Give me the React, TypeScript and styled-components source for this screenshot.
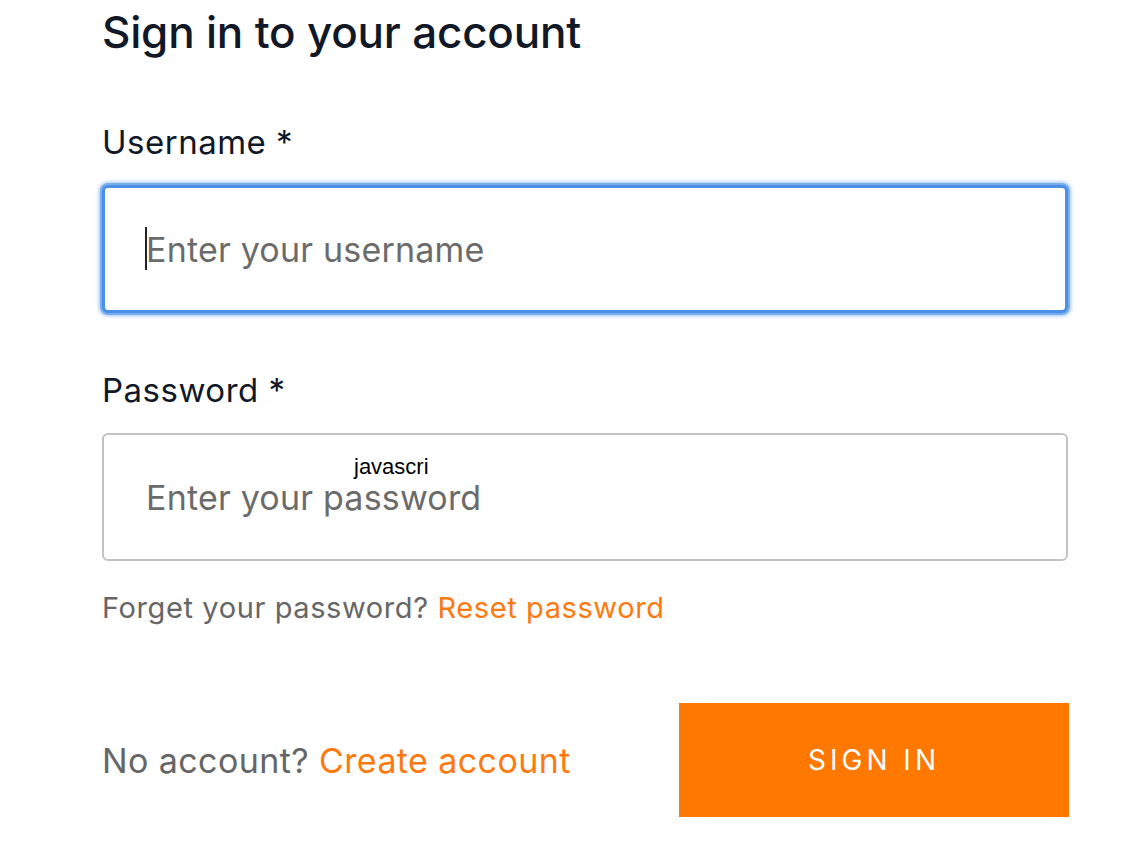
import React from "react";
import styled, { createGlobalStyle } from "styled-components";

const Global = createGlobalStyle`
  html, body { margin: 0; padding: 0; background: #ffffff; }
  body { font-family: Inter, "Noto Sans", "Liberation Sans", sans-serif; -webkit-font-smoothing: antialiased; }
  * { box-sizing: border-box; }
`;

const Page = styled.div`
  width: 1134px;
  height: 846px;
  padding: 0 66px 0 102px;
  display: flex;
  flex-direction: column;
`;

const Title = styled.h1`
  margin: 0;
  padding-top: 5px;
  font-size: 44px;
  line-height: 54px;
  font-weight: 500;
  color: #111827;
  letter-spacing: -0.2px;
`;

const Field = styled.div<{ $top: number }>`
  display: flex;
  flex-direction: column;
  margin-top: ${(p) => p.$top}px;
`;

const Label = styled.label`
  font-size: 33px;
  line-height: 40px;
  color: #111827;
  font-weight: 400;
  letter-spacing: 0.5px;
  margin-bottom: 23px;
`;

const InputWrap = styled.div`
  position: relative;
  height: 128px;
`;

const Input = styled.input<{ $focused?: boolean }>`
  width: 100%;
  height: 100%;
  border-radius: 6px;
  border: ${(p) => (p.$focused ? "3px solid #4a8fe8" : "2px solid #c2c2c2")};
  box-shadow: ${(p) =>
    p.$focused
      ? "0 0 0 2px rgba(74,143,232,0.6), 0 0 3px 4px rgba(74,143,232,0.35)"
      : "none"};
  padding: 0 0 0 ${(p) => (p.$focused ? 41 : 42)}px;
  font-family: inherit;
  font-size: 34px;
  letter-spacing: 0.2px;
  color: #333;
  outline: none;
  background: #fff;
  &::placeholder { color: #6b6b6b; }
`;

const Caret = styled.span`
  position: absolute;
  left: 43px;
  top: 42px;
  width: 2px;
  height: 43px;
  background: #222;
`;

const Overlay = styled.span`
  position: absolute;
  left: 252px;
  top: 21px;
  font-family: "Liberation Sans", Arial, sans-serif;
  font-size: 22px;
  color: #000;
  pointer-events: none;
`;

const Hint = styled.p`
  margin: 30px 0 0;
  font-size: 29px;
  line-height: 34px;
  color: #666;
  letter-spacing: 0.6px;
`;

const Link = styled.a`
  color: #ff7a0e;
  text-decoration: none;
  cursor: pointer;
`;

const Footer = styled.div`
  margin-top: 78px;
  display: flex;
  align-items: center;
  justify-content: space-between;
`;

const Note = styled.span`
  font-size: 34px;
  letter-spacing: 0.4px;
  color: #666;
`;

const Button = styled.button`
  width: 390px;
  height: 114px;
  margin-right: -1px;
  border: none;
  background: #ff7800;
  color: #fff;
  font-family: inherit;
  font-size: 28px;
  letter-spacing: 4px;
  font-weight: 400;
  text-transform: uppercase;
  cursor: pointer;
`;

export default function App() {
  return (
    <>
      <Global />
      <Page>
        <Title>Sign in to your account</Title>
        <Field $top={63}>
          <Label>Username *</Label>
          <InputWrap>
            <Input $focused placeholder="Enter your username" />
            <Caret />
          </InputWrap>
        </Field>
        <Field $top={57}>
          <Label>Password *</Label>
          <InputWrap>
            <Input type="password" placeholder="Enter your password" />
            <Overlay>javascri</Overlay>
          </InputWrap>
        </Field>
        <Hint>
          Forget your password? <Link>Reset password</Link>
        </Hint>
        <Footer>
          <Note>
            No account? <Link>Create account</Link>
          </Note>
          <Button>Sign in</Button>
        </Footer>
      </Page>
    </>
  );
}
